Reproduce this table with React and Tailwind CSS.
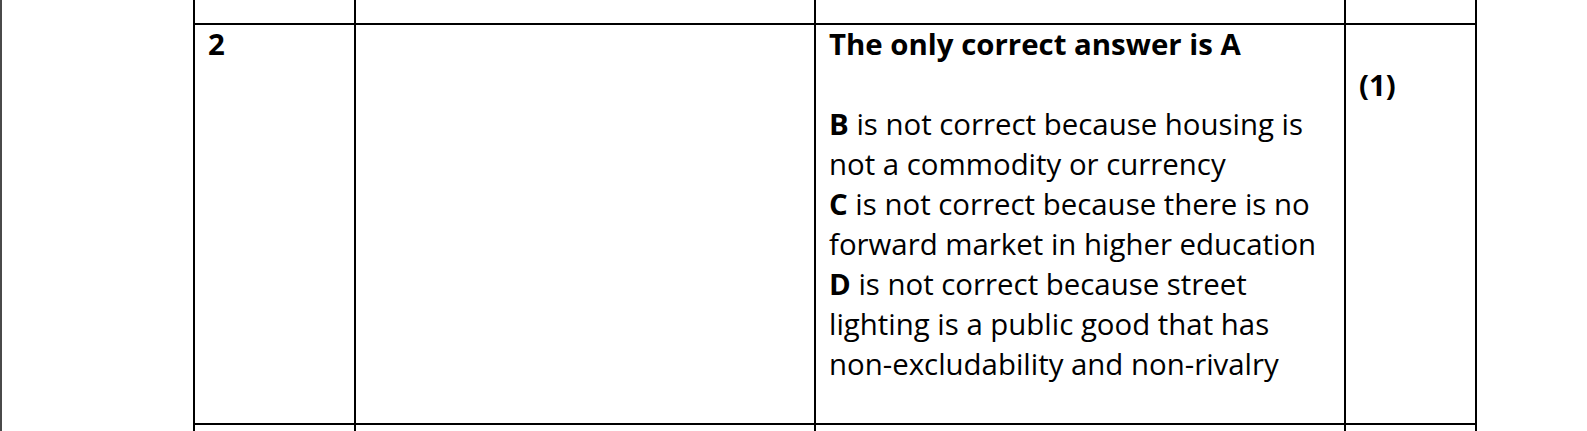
export default function App() {
  const font = { fontFamily: '"Open Sans", "Noto Sans", sans-serif' };
  return (
    <div className="h-[431px] w-[1587px] overflow-hidden bg-white flex" style={font}>
      <div className="w-[2px] h-full shrink-0 bg-[#4a4a4a]" />
      <div className="ml-[191px] flex flex-col text-black text-[29.4px] leading-[40px]">
        <div className="grid shrink-0 grid-cols-[161px_460px_530px_133px] h-[23px]">
          <div className="border-l-2 border-black" />
          <div className="border-l-2 border-black" />
          <div className="border-l-2 border-black" />
          <div className="border-x-2 border-black" />
        </div>
        <div className="grid shrink-0 grid-cols-[161px_460px_530px_133px] h-[400px] border-t-2 border-black">
          <div className="border-l-2 border-black px-[13px]">
            <p className="font-bold -mt-[1px]">2</p>
          </div>
          <div className="border-l-2 border-black" />
          <div className="border-l-2 border-black pl-[13px] pr-[12px]">
            <p className="font-bold -mt-[1px]">The only correct answer is A</p>
            <div className="mt-[40px]">
              <p><span className="font-bold">B</span> is not correct because housing is not a commodity or currency</p>
              <p><span className="font-bold">C</span> is not correct because there is no forward market in higher education</p>
              <p><span className="font-bold">D</span> is not correct because street lighting is a public good that has non-excludability and non-rivalry</p>
            </div>
          </div>
          <div className="border-x-2 border-black px-[13px] pt-[40px]">
            <p className="font-bold">(1)</p>
          </div>
        </div>
        <div className="grid shrink-0 grid-cols-[161px_460px_530px_133px] h-[20px] border-t-2 border-black">
          <div className="border-l-2 border-black" />
          <div className="border-l-2 border-black" />
          <div className="border-l-2 border-black" />
          <div className="border-x-2 border-black" />
        </div>
      </div>
    </div>
  );
}
